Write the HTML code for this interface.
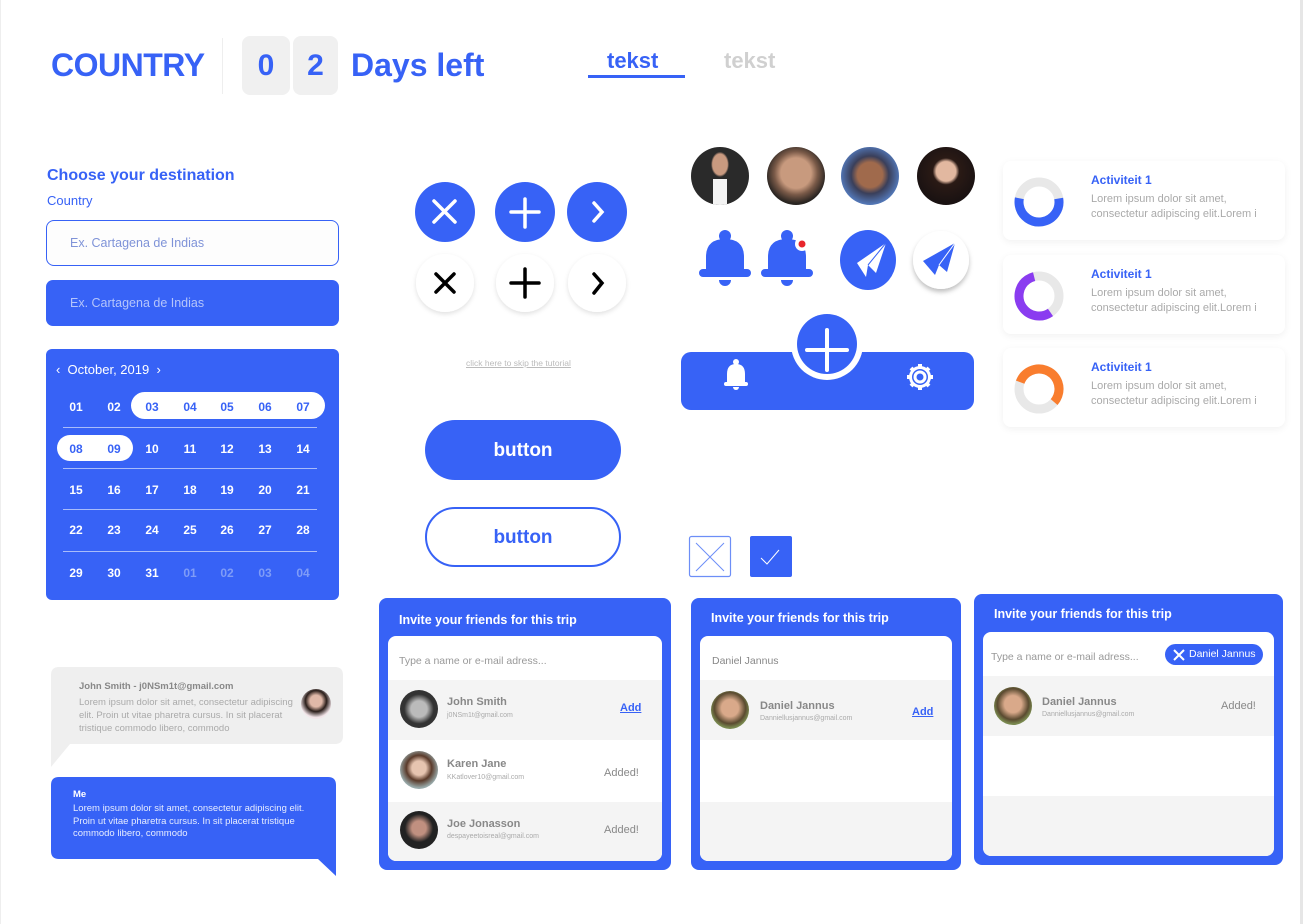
<!DOCTYPE html>
<html><head><meta charset="utf-8"><style>
*{box-sizing:border-box;margin:0;padding:0}
body{width:1304px;height:924px;position:relative;background:#fff;font-family:"Liberation Sans",sans-serif;overflow:hidden}
.a{position:absolute}
.b{background:#3762f6}
.t{white-space:nowrap}
.cal span{position:absolute;width:30px;margin-left:-15px;text-align:center;font-weight:bold;font-size:12px;color:#fff}
.cal .s{color:#3762f6}
.cal .f{color:#7f9cf7}
.line{position:absolute;left:17px;width:254px;height:1px;background:#a9bcfa}
.card{position:absolute;background:#fff;border-radius:8px;box-shadow:0 2px 8px rgba(0,0,0,.06)}
.card .h{position:absolute;left:88px;top:12px;color:#3762f6;font-size:12px;font-weight:bold}
.card .p{position:absolute;left:88px;top:31px;color:#aaa;font-size:11px;line-height:15px;white-space:nowrap}
.inv{position:absolute;border-radius:8px;background:#3762f6}
.inv .tt{position:absolute;left:20px;color:#fff;font-size:12.5px;font-weight:bold}
.inv .in{position:absolute;left:9px;right:9px;bottom:9px;background:#fff;border-radius:8px;overflow:hidden}
.row{position:absolute;left:0;right:0;height:60px}
.g{background:#f4f4f4}
.av{position:absolute;border-radius:50%}
.nm{position:absolute;font-size:11px;color:#888;font-weight:bold}
.em{position:absolute;font-size:7px;color:#aaa}
.add{position:absolute;font-size:11px;color:#3762f6;text-decoration:underline;font-weight:bold}
.added{position:absolute;font-size:11px;color:#888}
</style></head><body>
<div class="a" style="left:0;top:0;width:1px;height:924px;background:#eee"></div>
<div class="a" style="left:1300px;top:0;width:3px;height:924px;background:#e6e6e6"></div>

<div class="a t" style="left:51px;top:47px;font-size:32px;font-weight:bold;color:#3762f6;letter-spacing:-0.5px">COUNTRY</div>
<div class="a" style="left:222px;top:38px;width:1px;height:56px;background:#eee"></div>
<div class="a" style="left:242px;top:36px;width:48px;height:59px;background:#f0f0f0;border-radius:8px;color:#3762f6;font-size:30px;font-weight:bold;text-align:center;line-height:60px">0</div>
<div class="a" style="left:293px;top:36px;width:45px;height:59px;background:#f0f0f0;border-radius:8px;color:#3762f6;font-size:30px;font-weight:bold;text-align:center;line-height:60px">2</div>
<div class="a t" style="left:351px;top:47px;font-size:32px;font-weight:bold;color:#3762f6">Days left</div>
<div class="a t" style="left:607px;top:48px;font-size:22px;font-weight:bold;color:#3762f6">tekst</div>
<div class="a" style="left:588px;top:75px;width:97px;height:3px;background:#3762f6"></div>
<div class="a t" style="left:724px;top:48px;font-size:22px;font-weight:bold;color:#d0d0d0">tekst</div>

<div class="a t" style="left:47px;top:167px;font-size:16px;font-weight:bold;color:#3762f6">Choose your destination</div>
<div class="a t" style="left:47px;top:193px;font-size:13px;color:#3762f6">Country</div>
<div class="a" style="left:46px;top:220px;width:293px;height:46px;border:1px solid #3762f6;border-radius:8px;background:#fdfdfd"></div>
<div class="a t" style="left:70px;top:236px;font-size:12.5px;color:#7f93d8">Ex. Cartagena de Indias</div>
<div class="a b" style="left:46px;top:280px;width:293px;height:46px;border-radius:7px"></div>
<div class="a t" style="left:70px;top:296px;font-size:12.5px;color:#b5c5fb">Ex. Cartagena de Indias</div>

<div class="a b cal" style="left:46px;top:349px;width:293px;height:251px;border-radius:6px">
<div class="a t" style="left:10px;top:13px;color:#fff;font-size:13px">&lsaquo;&nbsp; October, 2019 &nbsp;&rsaquo;</div>
<div class="a" style="left:85px;top:43px;width:194px;height:27px;background:#fff;border-radius:14px"></div>
<div class="a" style="left:11px;top:86px;width:76px;height:26px;background:#fff;border-radius:13px"></div>
<div class="line" style="top:78px"></div><div class="line" style="top:119px"></div><div class="line" style="top:160px"></div><div class="line" style="top:202px"></div>
<span style="left:30px;top:51px">01</span><span style="left:68px;top:51px">02</span><span class="s" style="left:106px;top:51px">03</span><span class="s" style="left:144px;top:51px">04</span><span class="s" style="left:181px;top:51px">05</span><span class="s" style="left:219px;top:51px">06</span><span class="s" style="left:257px;top:51px">07</span>
<span class="s" style="left:30px;top:93px">08</span><span class="s" style="left:68px;top:93px">09</span><span style="left:106px;top:93px">10</span><span style="left:144px;top:93px">11</span><span style="left:181px;top:93px">12</span><span style="left:219px;top:93px">13</span><span style="left:257px;top:93px">14</span>
<span style="left:30px;top:134px">15</span><span style="left:68px;top:134px">16</span><span style="left:106px;top:134px">17</span><span style="left:144px;top:134px">18</span><span style="left:181px;top:134px">19</span><span style="left:219px;top:134px">20</span><span style="left:257px;top:134px">21</span>
<span style="left:30px;top:174px">22</span><span style="left:68px;top:174px">23</span><span style="left:106px;top:174px">24</span><span style="left:144px;top:174px">25</span><span style="left:181px;top:174px">26</span><span style="left:219px;top:174px">27</span><span style="left:257px;top:174px">28</span>
<span style="left:30px;top:217px">29</span><span style="left:68px;top:217px">30</span><span style="left:106px;top:217px">31</span><span class="f" style="left:144px;top:217px">01</span><span class="f" style="left:181px;top:217px">02</span><span class="f" style="left:219px;top:217px">03</span><span class="f" style="left:257px;top:217px">04</span>
</div>

<svg class="a" style="left:400px;top:170px" width="250" height="160">
<defs><filter id="sh" x="-30%" y="-30%" width="160%" height="160%"><feDropShadow dx="0" dy="2" stdDeviation="2.5" flood-opacity=".12"/></filter></defs>
<circle cx="45" cy="42" r="30" fill="#3762f6"/><circle cx="125" cy="42" r="30" fill="#3762f6"/><circle cx="197" cy="42" r="30" fill="#3762f6"/>
<circle cx="45" cy="113" r="29" fill="#fff" filter="url(#sh)"/><circle cx="125" cy="113" r="29" fill="#fff" filter="url(#sh)"/><circle cx="197" cy="113" r="29" fill="#fff" filter="url(#sh)"/>
<g stroke="#fff" stroke-width="3.5" stroke-linecap="round" fill="none"><path d="M34 31L55 52M55 31L34 52"/><path d="M125 29V57M111 42H139"/><path d="M194 33L202 42L194 51"/></g>
<g stroke="#000" stroke-width="3.5" stroke-linecap="round" fill="none"><path d="M36 104L54 122M54 104L36 122"/><path d="M125 99V127M111 113H139"/><path d="M194 104L202 113L194 123"/></g>
</svg>
<div class="a t" style="left:466px;top:358px;font-size:8.5px;color:#bbb;text-decoration:underline">click here to skip the tutorial</div>

<div class="a b" style="left:425px;top:420px;width:196px;height:60px;border-radius:30px;color:#fff;font-size:19px;font-weight:bold;text-align:center;line-height:62px">button</div>
<div class="a" style="left:425px;top:507px;width:196px;height:60px;border-radius:30px;border:2px solid #3762f6;color:#3762f6;font-size:19px;font-weight:bold;text-align:center;line-height:58px">button</div>

<div class="av" style="left:691px;top:147px;width:58px;height:58px;background:radial-gradient(ellipse at 50% 30%,#c99a80 0 18%,#2a2a2a 22%),#222;overflow:hidden"><div class="a" style="left:22px;top:32px;width:14px;height:26px;background:#f3f3f3"></div></div>
<div class="av" style="left:767px;top:147px;width:58px;height:58px;background:radial-gradient(circle at 50% 45%,#c89a7e 0 35%,#7a5a48 50%,#2a2522 70%)"></div>
<div class="av" style="left:841px;top:147px;width:58px;height:58px;background:radial-gradient(circle at 50% 48%,#a06a4c 0 30%,#3a3f5a 45%,#5276b5 70%)"></div>
<div class="av" style="left:917px;top:147px;width:58px;height:58px;background:radial-gradient(circle at 50% 42%,#e2b8a0 0 22%,#2a1a15 30%,#1a1212 70%)"></div>

<svg class="a" style="left:690px;top:225px" width="290" height="75">
<defs><filter id="sh2" x="-30%" y="-30%" width="160%" height="160%"><feDropShadow dx="0" dy="3" stdDeviation="2.5" flood-opacity=".25"/></filter></defs>
<g fill="#3762f6">
<circle cx="35" cy="11" r="6"/><path d="M16 47V32Q16 14 35 14Q54 14 54 32V47Z"/><rect x="9" y="44" width="52" height="8" rx="4"/><path d="M29 55A6 6 0 0 0 41 55Z"/>
<circle cx="97" cy="11" r="6"/><path d="M78 47V32Q78 14 97 14Q116 14 116 32V47Z"/><rect x="71" y="44" width="52" height="8" rx="4"/><path d="M91 55A6 6 0 0 0 103 55Z"/>
</g>
<circle cx="112" cy="19" r="7" fill="#fff"/><circle cx="112" cy="19" r="3.5" fill="#e8262c"/>
<ellipse cx="178" cy="35" rx="28" ry="30" fill="#3762f6"/>
<ellipse cx="251" cy="35" rx="28" ry="29" fill="#fff" filter="url(#sh2)"/>
<path d="M167 38L196 18L186 48L178 40L176 52Z" fill="#fff"/><path d="M178 40L196 18" stroke="#3762f6" stroke-width="1"/>
<path d="M233 36L265 18L257 47L249 40L245 50Z" fill="#3762f6"/><path d="M249 40L265 18" stroke="#fff" stroke-width="1"/>
</svg>

<div class="a b" style="left:681px;top:352px;width:293px;height:58px;border-radius:10px"></div>
<div class="a" style="left:791px;top:308px;width:72px;height:72px;border-radius:50%;background:#fff"></div>
<div class="a b" style="left:797px;top:314px;width:60px;height:60px;border-radius:50%"></div>
<svg class="a" style="left:681px;top:300px" width="293" height="110">
<path d="M146 30V70M126 50H166" stroke="#fff" stroke-width="4" stroke-linecap="round"/>
<g fill="#fff"><circle cx="55" cy="62" r="3"/><path d="M46 84V74Q46 64 55 64Q64 64 64 74V84Z"/><rect x="43" y="82" width="24" height="4" rx="2"/><path d="M52 87A3 3 0 0 0 58 87Z"/></g>
<g transform="translate(239 77)" fill="none" stroke="#fff" stroke-width="3"><circle r="5"/><path d="M0-13V-9M0 9V13M-13 0H-9M9 0H13M-9-9L-6.5-6.5M6.5 6.5L9 9M9-9L6.5-6.5M-6.5 6.5L-9 9" stroke-width="4"/><circle r="9.5" stroke-width="3"/></g>
</svg>

<div class="card" style="left:1003px;top:161px;width:282px;height:79px"><svg class="a" style="left:11px;top:16px" width="50" height="50"><circle cx="25" cy="25" r="20" fill="none" stroke="#e8e8e8" stroke-width="9"/><circle cx="25" cy="25" r="20" fill="none" stroke="#3762f6" stroke-width="9" stroke-dasharray="70 60" transform="rotate(-10 25 25)"/></svg><div class="h">Activiteit 1</div><div class="p">Lorem ipsum dolor sit amet,<br>consectetur adipiscing elit.Lorem i</div></div>
<div class="card" style="left:1003px;top:255px;width:282px;height:79px"><svg class="a" style="left:11px;top:16px" width="50" height="50"><circle cx="25" cy="25" r="20" fill="none" stroke="#e8e8e8" stroke-width="9"/><circle cx="25" cy="25" r="20" fill="none" stroke="#8a3cf0" stroke-width="9" stroke-dasharray="70 60" transform="rotate(55 25 25)"/></svg><div class="h">Activiteit 1</div><div class="p">Lorem ipsum dolor sit amet,<br>consectetur adipiscing elit.Lorem i</div></div>
<div class="card" style="left:1003px;top:348px;width:282px;height:79px"><svg class="a" style="left:11px;top:16px" width="50" height="50"><circle cx="25" cy="25" r="20" fill="none" stroke="#e8e8e8" stroke-width="9"/><circle cx="25" cy="25" r="20" fill="none" stroke="#f97d2e" stroke-width="9" stroke-dasharray="70 60" transform="rotate(200 25 25)"/></svg><div class="h">Activiteit 1</div><div class="p">Lorem ipsum dolor sit amet,<br>consectetur adipiscing elit.Lorem i</div></div>

<svg class="a" style="left:688px;top:535px" width="106" height="44">
<rect x="1.5" y="1.5" width="41" height="40" rx="2" fill="#fff" stroke="#6d8ef7" stroke-width="1.2"/><path d="M8 8L36 36M36 8L8 36" stroke="#6d8ef7" stroke-width="1"/>
<rect x="62" y="1" width="42" height="41" rx="2" fill="#3762f6"/><path d="M73 23L79 29L91 15" stroke="#fff" stroke-width="1" fill="none"/>
</svg>

<div class="inv" style="left:379px;top:598px;width:292px;height:272px">
<div class="tt" style="top:15px">Invite your friends for this trip</div>
<div class="in" style="top:38px">
<div class="a t" style="left:11px;top:19px;font-size:10.5px;color:#999">Type a name or e-mail adress...</div>
<div class="row g" style="top:44px"><div class="av" style="left:12px;top:10px;width:38px;height:38px;background:radial-gradient(circle at 50% 50%,#bbb 0 30%,#333 55%)"></div><div class="nm" style="left:59px;top:16px">John Smith</div><div class="em" style="left:59px;top:32px">j0NSm1t@gmail.com</div><div class="add" style="left:232px;top:22px">Add</div></div>
<div class="row" style="top:104px;height:62px"><div class="av" style="left:12px;top:11px;width:38px;height:38px;background:radial-gradient(circle at 50% 45%,#e6c4b0 0 25%,#5a3a2a 45%,#9aa 70%)"></div><div class="nm" style="left:59px;top:18px">Karen Jane</div><div class="em" style="left:59px;top:34px">KKatlover10@gmail.com</div><div class="added" style="left:216px;top:27px">Added!</div></div>
<div class="row g" style="top:166px"><div class="av" style="left:12px;top:9px;width:38px;height:38px;background:radial-gradient(circle at 50% 45%,#c09080 0 25%,#222 50%)"></div><div class="nm" style="left:59px;top:16px">Joe Jonasson</div><div class="em" style="left:59px;top:31px">despayeetoisreal@gmail.com</div><div class="added" style="left:216px;top:22px">Added!</div></div>
</div></div>

<div class="inv" style="left:691px;top:598px;width:270px;height:272px">
<div class="tt" style="top:13px">Invite your friends for this trip</div>
<div class="in" style="top:38px">
<div class="a t" style="left:12px;top:19px;font-size:10.5px;color:#888">Daniel Jannus</div>
<div class="row g" style="top:44px"><div class="av" style="left:11px;top:11px;width:38px;height:38px;background:radial-gradient(circle at 50% 45%,#d9a98a 0 30%,#5a4a30 55%,#7a8a50 70%)"></div><div class="nm" style="left:60px;top:20px">Daniel Jannus</div><div class="em" style="left:60px;top:35px">Danniellusjannus@gmail.com</div><div class="add" style="left:212px;top:26px">Add</div></div>
<div class="row g" style="top:166px"></div>
</div></div>

<div class="inv" style="left:974px;top:594px;width:309px;height:271px">
<div class="tt" style="top:13px">Invite your friends for this trip</div>
<div class="in" style="top:38px">
<div class="a t" style="left:8px;top:19px;font-size:10.5px;color:#999">Type a name or e-mail adress...</div>
<div class="a b t" style="left:182px;top:12px;width:98px;height:21px;border-radius:11px;color:#fff;font-size:10.5px;line-height:21px;padding-left:24px">Daniel Jannus</div>
<svg class="a" style="left:190px;top:17px" width="12" height="12"><path d="M1 1L11 11M11 1L1 11" stroke="#fff" stroke-width="2"/></svg>
<div class="row g" style="top:44px"><div class="av" style="left:11px;top:11px;width:38px;height:38px;background:radial-gradient(circle at 50% 45%,#d9a98a 0 30%,#5a4a30 55%,#7a8a50 70%)"></div><div class="nm" style="left:59px;top:20px">Daniel Jannus</div><div class="em" style="left:59px;top:35px">Danniellusjannus@gmail.com</div><div class="added" style="left:238px;top:24px">Added!</div></div>
<div class="row g" style="top:164px"></div>
</div></div>

<svg class="a" style="left:50px;top:666px" width="300" height="215">
<path d="M9 1H285Q293 1 293 9V70Q293 78 285 78H20L1 101V9Q1 1 9 1Z" fill="#efefef"/>
<path d="M9 111H278Q286 111 286 119V210L268 193H9Q1 193 1 185V119Q1 111 9 111Z" fill="#3762f6"/>
</svg>
<div class="a t" style="left:79px;top:681px;font-size:9.5px;font-weight:bold;color:#888">John Smith - j0NSm1t@gmail.com</div>
<div class="a t" style="left:79px;top:696px;font-size:9.5px;line-height:13px;color:#aaa">Lorem ipsum dolor sit amet, consectetur adipiscing<br>elit. Proin ut vitae pharetra cursus. In sit placerat<br>tristique commodo libero, commodo</div>
<div class="av" style="left:301px;top:689px;width:30px;height:30px;background:radial-gradient(circle at 50% 40%,#e0b8a8 0 25%,#2a1e1a 45%,#f3e6ea 70%)"></div>
<div class="a t" style="left:73px;top:789px;font-size:9.5px;font-weight:bold;color:#fff">Me</div>
<div class="a t" style="left:73px;top:803px;font-size:9.5px;line-height:12.5px;color:#e6ecff">Lorem ipsum dolor sit amet, consectetur adipiscing elit.<br>Proin ut vitae pharetra cursus. In sit placerat tristique<br>commodo libero, commodo</div>
</body></html>
